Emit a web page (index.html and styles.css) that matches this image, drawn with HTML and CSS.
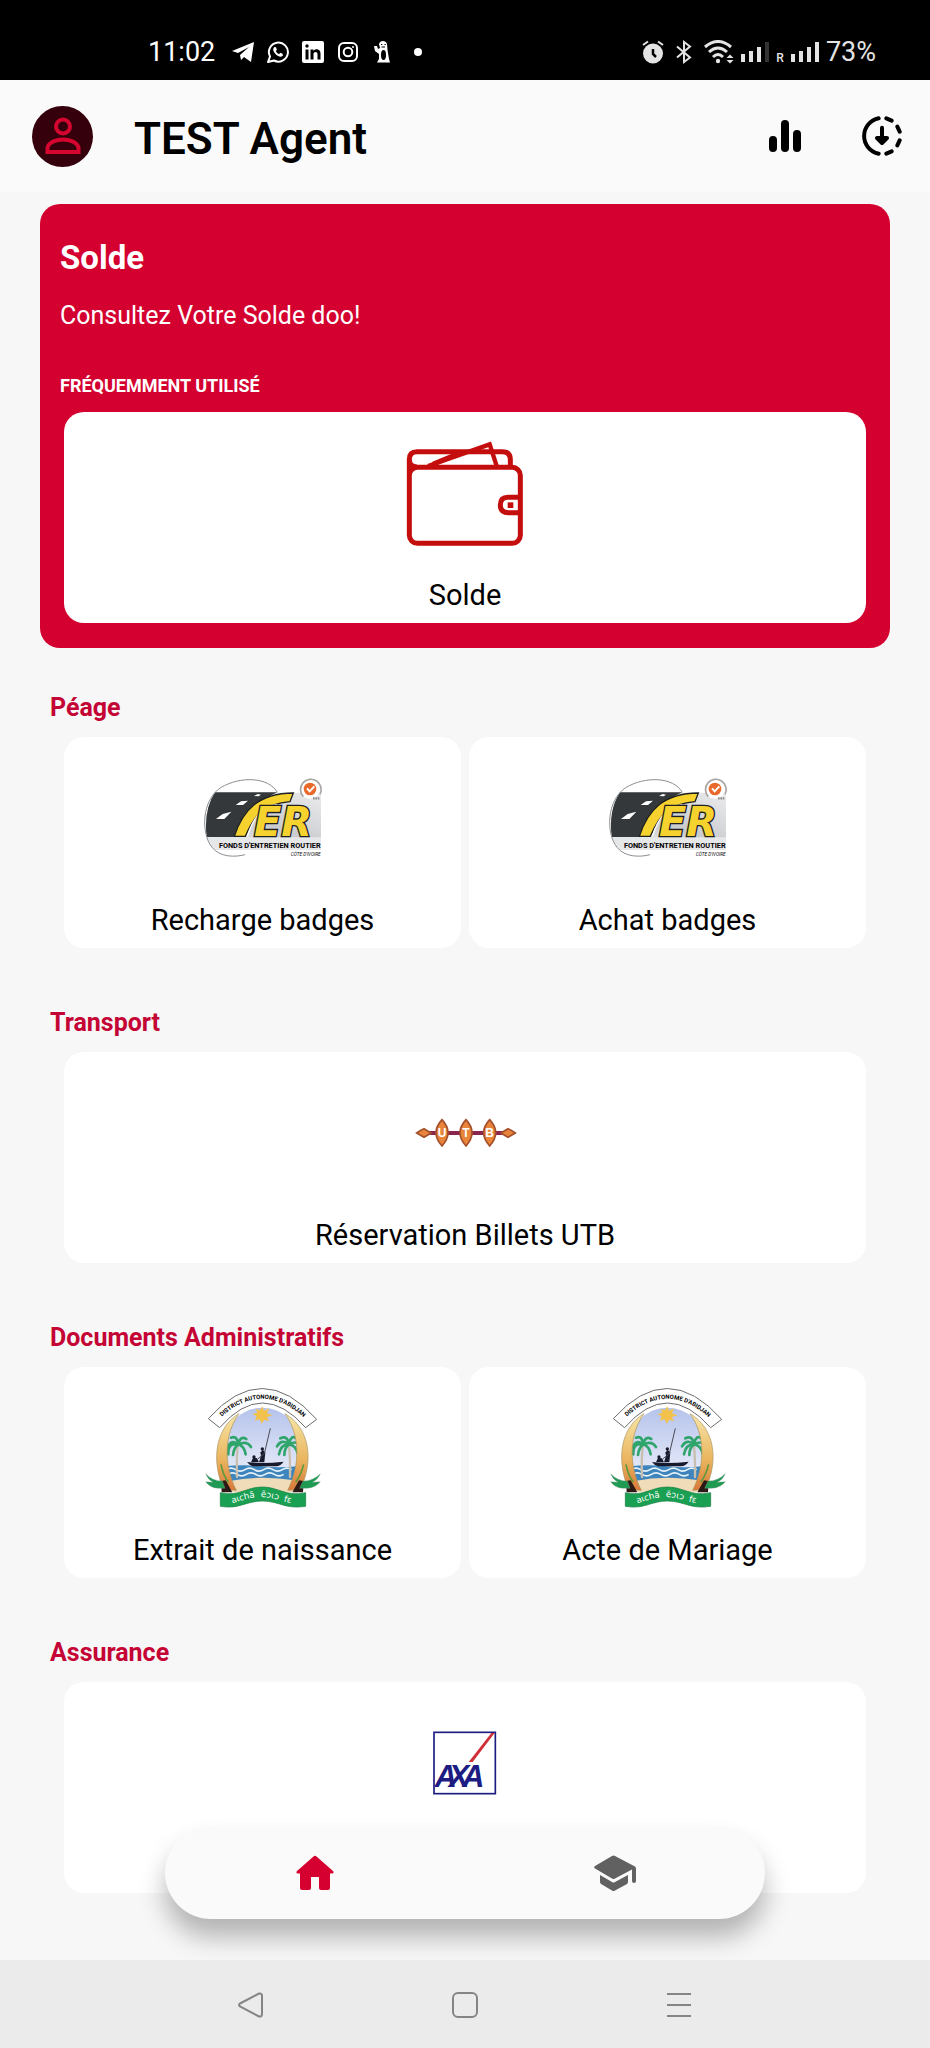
FILE: index.html
```html
<!DOCTYPE html>
<html lang="fr">
  <head>
    <meta charset="UTF-8" />
    <meta name="viewport" content="width=device-width, initial-scale=1.0" />
    <title>TEST Agent</title>
    <link rel="stylesheet" href="styles.css" />
  </head>
  <body>
    <!-- Logos utilisés plusieurs fois -->
    <svg class="sprite" aria-hidden="true">
      <defs>
        <linearGradient id="ferGrey" x1="0" y1="1" x2="1" y2="0">
          <stop offset="0" stop-color="#f2f2f3" />
          <stop offset="0.5" stop-color="#c9cbce" />
          <stop offset="1" stop-color="#ececee" />
        </linearGradient>
        <linearGradient id="sky" x1="0" y1="0" x2="0" y2="1">
          <stop offset="0" stop-color="#b5c3ec" />
          <stop offset="1" stop-color="#f3f4fb" />
        </linearGradient>
        <linearGradient id="tusk" x1="0" y1="0" x2="0" y2="1">
          <stop offset="0" stop-color="#f7e6a8" />
          <stop offset="0.6" stop-color="#eab55f" />
          <stop offset="1" stop-color="#d9793a" />
        </linearGradient>
        <path id="crestArc" d="M62 140Q200 2 340 142" />
        <path id="ribbonArc" d="M82 390C130 384 150 366 197 366S260 388 314 384" />
      </defs>

      <symbol id="logo-fer" viewBox="39 -9 360 372">
        <path d="M232 98H393V270H75Q50 240 47 205Z" fill="url(#ferGrey)" />
        <path d="M75 97H262Q185 130 133 231H50Q40 150 75 97Z" fill="#34383b" />
        <path d="M49 232H393V270H75Q58 255 49 232Z" fill="#e6e7e9" />
        <path d="M262 97C235 50 150 48 92 83C35 120 32 220 66 262C90 292 135 292 165 284" fill="none" stroke="#8b8e91" stroke-width="3" />
        <path d="M78 177L98 162L124 155L103 177ZM137 135L153 124L174 122L159 135ZM192 108L203 102L213 104L206 109Z" fill="#fff" />
        <path d="M133 229C158 150 205 100 310 99L300 125C225 132 195 160 166 229Z" fill="#f6d22e" stroke="#1d1f20" stroke-width="4" />
        <path d="M172 229C192 165 225 137 262 134" fill="none" stroke="#fff" stroke-width="4" />
        <text class="fer-letters" x="192" y="229">ER</text>
        <circle cx="360" cy="85" r="31" fill="#fff" />
        <path d="M340 110A31 31 0 1 1 390 103" fill="none" stroke="#a9a5a3" stroke-width="5" />
        <circle cx="360" cy="87" r="19" fill="#e9692c" />
        <path d="M351 85L359 94L373 79" fill="none" stroke="#fff" stroke-width="6" />
        <path d="M369 115H390" stroke="#8e8e8e" stroke-width="7" stroke-dasharray="5 2" />
        <text class="fer-name" x="392" y="265">FONDS D'ENTRETIEN ROUTIER</text>
        <text class="fer-country" x="392" y="289">CÔTE D'IVOIRE</text>
      </symbol>

      <symbol id="logo-district" viewBox="22 36 360 372">
        <ellipse cx="200" cy="220" rx="118" ry="122" fill="url(#sky)" />
        <path d="M88 274Q140 268 200 274T312 272Q308 302 288 322H108Q92 302 88 274Z" fill="#3f85bd" />
        <path d="M92 284q14 -9 28 0t28 0t28 0t28 0t28 0t28 0t28 0M96 298q14 -9 28 0t28 0t28 0t28 0t28 0t28 0" fill="none" stroke="#e9f4fb" stroke-width="5" />
        <path d="M102 318Q195 300 296 316L290 352H110Z" fill="#f1dcb9" />
        <!-- soleil -->
        <path d="M200 94l5 13 15 -7 -6 15 17 6 -17 5 6 13 -14 -5 -8 12 -6 -13 -15 4 6 -13 -13 -7 15 -4 -5 -12 13 5z" fill="#f2c24c" />
        <!-- palmiers -->
        <g fill="none" stroke-linecap="round">
          <path d="M126 214Q122 250 124 306M280 214Q284 250 283 306" stroke="#c9bfae" stroke-width="7" />
          <path d="M128 208Q106 190 96 218M128 208Q96 202 98 238M128 208Q114 218 112 240M128 208Q124 180 106 188M128 208Q134 180 152 192M128 208Q154 196 166 216M128 208Q146 214 150 238" stroke="#2fa56b" stroke-width="8" />
          <path d="M280 208Q258 190 244 214M280 208Q256 206 250 238M280 208Q266 218 266 240M280 208Q276 180 254 190M280 208Q286 178 302 190M280 208Q306 194 316 216M280 208Q300 210 306 236" stroke="#2fa56b" stroke-width="8" />
        </g>
        <!-- pirogue -->
        <path d="M154 261Q200 267 264 260Q256 272 240 274H172Q160 270 154 261Z" fill="#161a2c" />
        <path d="M166 262L172 248L184 250L190 262ZM190 262L196 242L194 232L202 226L209 232L206 262ZM170 246a5 5 0 1 1 10 0a5 5 0 1 1 -10 0M195 222a5 5 0 1 1 10 0a5 5 0 1 1 -10 0" fill="#161a2c" />
        <path d="M186 252L206 236L224 160" fill="none" stroke="#4b4b55" stroke-width="3" />
        <!-- défenses -->
        <path d="M130 116C62 156 44 250 84 344L122 346C84 270 84 180 130 116Z" fill="url(#tusk)" stroke="#a8935a" stroke-width="2" />
        <path d="M268 116C338 156 358 250 314 344L276 346C314 270 314 180 268 116Z" fill="url(#tusk)" stroke="#a8935a" stroke-width="2" />
        <path d="M76 268Q82 300 98 322M324 268Q316 300 300 322" fill="none" stroke="#5d9a3c" stroke-width="5" />
        <path d="M76 318L90 316L110 352H78ZM324 318L310 316L290 352H322Z" fill="#2b1a14" />
        <!-- ruban -->
        <path d="M30 296Q50 318 80 318L88 340L66 340Q42 338 30 320L52 322Q36 312 30 296ZM374 296Q352 318 322 318L312 340L334 340Q360 338 374 320L350 322Q368 312 374 296Z" fill="#1f9a53" stroke="#8a9a8e" stroke-width="1" />
        <path d="M74 353C130 366 150 336 200 336S270 366 330 353V394C270 404 250 378 200 378S130 404 74 394Z" fill="#19a052" stroke="#137a3e" stroke-width="2" />
        <text class="ribbon-text"><textPath href="#ribbonArc" startOffset="50%">aɩchã&nbsp; &#7869;ɔɩɔ&nbsp; fɛ</textPath></text>
        <!-- bandeau -->
        <path d="M38 131Q200 -51 363 133L330 158Q200 10 72 158Z" fill="#fff" stroke="#6d6d6d" stroke-width="3" />
        <text class="crest-text"><textPath href="#crestArc" startOffset="50%">DISTRICT AUTONOME D'ABIDJAN</textPath></text>
      </symbol>
    </svg>

    <div class="status-bar">
      <div class="status-left">
        <span class="clock">11:02</span>
        <svg width="22" height="22" viewBox="0 0 22 22"><path d="M0 10L22 1L19 21L12 16L9 19L8 14L17 6L6 12Z" fill="#fff" /></svg>
        <svg width="22" height="22" viewBox="0 0 22 22">
          <path d="M1 21L3 15.500A9.500 9.500 0 1 1 7 19.500Z" fill="none" stroke="#fff" stroke-width="2" stroke-linejoin="round" />
          <path d="M7.500 6C5 8 6.500 11 9 13.500C11.500 15.800 14 16.500 16 14.500L15.500 12.800L13.300 11.800L12 13.200C10.500 12.500 9.500 11.500 8.800 10L9.900 8.800L9 6.200Z" fill="#fff" />
        </svg>
        <svg width="22" height="22" viewBox="0 0 22 22">
          <rect width="22" height="22" rx="2" fill="#fff" />
          <path d="M3.500 8.500H6.500V18.500H3.500ZM3.300 5a1.700 1.700 0 1 1 3.400 0a1.700 1.700 0 1 1 -3.400 0M8.500 8.500H11.400V10C13 7.500 18.500 7.500 18.500 12.500V18.500H15.500V13.300C15.500 10 11.500 10.300 11.500 13.300V18.500H8.500Z" fill="#000" />
        </svg>
        <svg width="22" height="22" viewBox="0 0 22 22" fill="none" stroke="#fff" stroke-width="2">
          <rect x="2" y="2" width="18" height="18" rx="5" />
          <circle cx="11" cy="11" r="4.300" />
          <circle cx="16" cy="6" r="1" fill="#fff" stroke="none" />
        </svg>
        <svg width="22" height="22" viewBox="0 0 22 22">
          <path d="M7 3Q8 0 11 0T15 3L15.500 9L17 18L18 21.500H5L7 18L7 13L3 10L2 5L5 5L6 8L8 7Z" fill="#fff" />
          <ellipse cx="11.500" cy="14" rx="2.500" ry="5" fill="#000" />
          <path d="M9 3.500H10.300M12.500 3.500H13.800M9.500 6H13" stroke="#000" stroke-width="1" />
        </svg>
        <svg width="22" height="22" viewBox="0 0 22 22"><circle cx="11" cy="11" r="4" fill="#fff" /></svg>
      </div>
      <div class="status-right">
        <svg class="spaced" width="22" height="24" viewBox="0 0 22 24">
          <circle cx="11" cy="13.500" r="10" fill="#e4e4e4" />
          <path d="M1 5L6 1.500M16 1.500L21 5" stroke="#e4e4e4" stroke-width="2" />
          <path d="M11 9V14L14 17" fill="none" stroke="#000" stroke-width="2.500" />
        </svg>
        <svg class="spaced" width="16" height="24" viewBox="0 0 16 24"><path d="M1 6.500L14 17.500L8 22V2L14 6.500L1 17.500" fill="none" stroke="#e4e4e4" stroke-width="2" /></svg>
        <svg width="30" height="24" viewBox="0 0 30 24">
          <path d="M1 7Q14 -4 27 7M5 12Q14 4 23 12M9 17Q14 12 19 17" fill="none" stroke="#e4e4e4" stroke-width="3" />
          <circle cx="14" cy="21" r="2.200" fill="#e4e4e4" />
          <path d="M22.500 18L26 14.500L29.500 18ZM22.500 20L26 23.500L29.500 20Z" fill="#e4e4e4" />
        </svg>
        <svg width="30" height="24" viewBox="0 0 30 24">
          <path d="M1 14h4v8h-4zM9 11h4v11h-4zM17 7h4v15h-4z" fill="#e4e4e4" />
          <path d="M25 2h4v20h-4z" fill="#333" />
        </svg>
        <span class="roaming">R</span>
        <svg width="30" height="24" viewBox="0 0 30 24"><path d="M1 14h4v8h-4zM9 11h4v11h-4zM17 7h4v15h-4zM25 2h4v20h-4z" fill="#e4e4e4" /></svg>
        <span>73%</span>
      </div>
    </div>

    <header class="header">
      <button class="avatar" type="button" aria-label="Profil">
        <svg width="36" height="38" viewBox="0 0 36 38" fill="none" stroke="#d4062f" stroke-width="4">
          <circle cx="18" cy="9.500" r="7" />
          <path d="M2.500 35V30.500C4 25 12 22.500 18 22.500S32 25 33.500 30.500V35Z" />
        </svg>
      </button>
      <h1>TEST Agent</h1>
      <button class="icon-button" type="button" aria-label="Statistiques">
        <svg width="34" height="34" viewBox="0 0 34 34"><path d="M5 21V29M17 5V29M29 15V29" stroke="#000" stroke-width="8" stroke-linecap="round" /></svg>
      </button>
      <button class="icon-button" type="button" aria-label="Téléchargements">
        <svg width="40" height="40" viewBox="0 0 120 120" fill="none" stroke="#000" stroke-width="12" stroke-linecap="round" stroke-linejoin="round">
          <path d="M50 7A54 54 0 0 0 50 113M73 7L89 14M106 32L113 47M113 73L106 88M89 106L73 113" />
          <path d="M60 35V64" />
          <path d="M45 66H75L60 81Z" fill="#000" />
        </svg>
      </button>
    </header>

    <main class="content">
      <section class="hero">
        <h2>Solde</h2>
        <p>Consultez Votre Solde doo!</p>
        <h3>FRÉQUEMMENT UTILISÉ</h3>
        <div class="tiles">
          <a class="tile" href="#solde">
            <svg class="tile-logo" viewBox="75 36 360 372" fill="none" stroke="#c40d0d" stroke-width="15" stroke-linejoin="round">
              <rect x="88" y="142" width="333" height="228" rx="24" />
              <path d="M88 165V118Q88 95 111 95H366Q391 95 391 118V138M88 118Q88 141 111 141" />
              <path d="M144 138L329 73L350 138" stroke-width="13" stroke-linejoin="miter" />
              <path d="M160 132L245 97" />
              <path d="M420 232H384Q361 232 361 255T384 278H420" />
              <path d="M383 247h17v17h-17z" fill="#c40d0d" stroke="none" />
            </svg>
            <span>Solde</span>
          </a>
        </div>
      </section>

      <section class="group">
        <h2>Péage</h2>
        <div class="tiles">
          <a class="tile" href="#recharge">
            <svg class="tile-logo"><use href="#logo-fer" /></svg>
            <span>Recharge badges</span>
          </a>
          <a class="tile" href="#achat">
            <svg class="tile-logo"><use href="#logo-fer" /></svg>
            <span>Achat badges</span>
          </a>
        </div>
      </section>

      <section class="group">
        <h2>Transport</h2>
        <div class="tiles">
          <a class="tile" href="#utb">
            <svg class="tile-logo" viewBox="15 -84 360 372">
              <path d="M80 99H320" stroke="#8c2450" stroke-width="12" />
              <g fill="#e8853a" stroke="#a5502c" stroke-width="5">
                <path d="M50 99Q62 90 72 86Q82 92 93 99Q82 106 72 112Q62 106 50 99Z" />
                <path d="M346 99Q334 90 324 86Q314 92 303 99Q314 106 324 112Q334 106 346 99Z" />
                <path d="M126 59Q162 98 126 138Q90 98 126 59Z" />
                <path d="M198 59Q234 98 198 138Q162 98 198 59Z" />
                <path d="M269 59Q305 98 269 138Q233 98 269 59Z" />
              </g>
              <g class="utb-letters">
                <text x="126" y="112">U</text>
                <text x="198" y="112">T</text>
                <text x="269" y="112">B</text>
              </g>
            </svg>
            <span>Réservation Billets UTB</span>
          </a>
        </div>
      </section>

      <section class="group">
        <h2>Documents Administratifs</h2>
        <div class="tiles">
          <a class="tile" href="#naissance">
            <svg class="tile-logo"><use href="#logo-district" /></svg>
            <span>Extrait de naissance</span>
          </a>
          <a class="tile" href="#mariage">
            <svg class="tile-logo"><use href="#logo-district" /></svg>
            <span>Acte de Mariage</span>
          </a>
        </div>
      </section>

      <section class="group">
        <h2>Assurance</h2>
        <div class="tiles">
          <a class="tile" href="#axa" aria-label="Assurance">
            <svg class="tile-logo" viewBox="-45 -42 360 372">
              <rect x="42" y="49" width="184" height="184" fill="#fff" stroke="#1c1c82" stroke-width="5" />
              <path d="M146 138L214 51H224L158 138Z" fill="#cf3038" />
              <g class="axa-letters">
                <text x="44" y="212">A</text>
                <text x="86" y="212">X</text>
                <text x="127" y="212">A</text>
              </g>
            </svg>
          </a>
        </div>
      </section>

      <nav class="tab-bar">
        <a href="#accueil" aria-label="Accueil">
          <svg width="38" height="36" viewBox="0 0 38 36"><path d="M17.500 1.500Q19 0 20.500 1.500L37 16Q38.500 18.500 36 18.500H34V33Q34 35 32 35H25Q23 35 23 33V22H15V33Q15 35 13 35H6Q4 35 4 33V18.500H2Q-.5 18.500 1 16Z" fill="#d5002f" /></svg>
        </a>
        <a href="#formation" aria-label="Formation">
          <svg width="42" height="36" viewBox="0 0 42 36" fill="#616161">
            <path d="M18 1Q19.500 0 21 1L41 11.500Q42 12.500 42 13.500V26Q42 28 40 28T38 26V14.500L21 23.500Q19.500 24.500 18 23.500L1 13.500Q-.5 12 1 11Z" />
            <path d="M6 20L18 27Q19.500 28 21 27L34 20V27Q34 28 33 29L21 35.500Q19.500 36.500 18 35.500L7 29Q6 28 6 27Z" />
          </svg>
        </a>
      </nav>
    </main>

    <footer class="system-bar">
      <button type="button" aria-label="Retour">
        <svg width="26" height="26" viewBox="0 0 26 26"><path d="M2 11.500L21 1.500Q24 1 24 4V22Q24 25 21 24.500L2 14.500Q0 13 2 11.500Z" /></svg>
      </button>
      <button type="button" aria-label="Écran d'accueil">
        <svg width="26" height="26" viewBox="0 0 26 26"><rect x="1" y="1" width="24" height="24" rx="5" /></svg>
      </button>
      <button type="button" aria-label="Applications récentes">
        <svg width="26" height="26" viewBox="0 0 26 26"><path d="M1 2H25M1 13H25M1 24H25" /></svg>
      </button>
    </footer>
  </body>
</html>
```

FILE: styles.css
```css
* {
  box-sizing: border-box;
}
body {
  margin: 0;
  min-height: 100vh;
  display: flex;
  flex-direction: column;
  font-family: Roboto, "Liberation Sans", sans-serif;
  background-color: #f7f7f7;
  color: #000;
}
h1,
h2,
h3,
p {
  margin: 0;
}
svg {
  display: block;
}
button {
  padding: 0;
  border: none;
  background: none;
  cursor: pointer;
}
.sprite {
  position: absolute;
  width: 0;
  height: 0;
}

/* Barre d'état */
.status-bar {
  display: flex;
  justify-content: space-between;
  height: 80px;
  padding: 24px 54px 0 148px;
  background-color: #000;
  color: #fff;
  font-size: 27px;
}
.status-left,
.status-right {
  display: flex;
  align-items: center;
  gap: 13px;
}
.clock {
  margin-right: 4px;
}
.status-right {
  gap: 6px;
  color: #e4e4e4;
}
.status-right .spaced {
  margin-right: 6px;
}
.roaming {
  padding-top: 11px;
  font-size: 12px;
  font-weight: 500;
}

/* En-tête */
.header {
  display: flex;
  align-items: center;
  height: 112px;
  padding: 0 28px 0 32px;
  background-color: #fafafa;
}
.header h1 {
  flex: 1;
  margin-left: 41px;
  padding-top: 5px;
  font-size: 44px;
  font-weight: 600;
}
.avatar {
  display: flex;
  align-items: center;
  justify-content: center;
  width: 61px;
  height: 61px;
  border-radius: 50%;
  background-color: #35000c;
}
.icon-button + .icon-button {
  margin-left: 60px;
}

/* Contenu */
.content {
  position: relative;
  flex: 1;
  padding: 12px 40px 7px;
  overflow: hidden;
}
.hero {
  margin-bottom: 45px;
  padding: 34px 20px 25px;
  border-radius: 20px;
  background-color: #d4002f;
  color: #fff;
}
.hero h2 {
  font-size: 33px;
  line-height: 40px;
}
.hero p {
  margin-top: 22px;
  font-size: 25px;
  line-height: 32px;
}
.hero h3 {
  margin: 42px 0 14px;
  font-size: 18px;
  line-height: 24px;
}
.hero .tiles {
  margin: 0 4px;
}
.group {
  margin-bottom: 60px;
}
.group h2 {
  margin: 0 10px 14px;
  color: #c40434;
  font-size: 25px;
  line-height: 30px;
}
.tiles {
  display: flex;
  gap: 8px;
  margin: 0 24px;
}
.tile {
  display: flex;
  flex: 1;
  flex-direction: column;
  align-items: center;
  justify-content: space-between;
  min-height: 211px;
  padding: 20px 10px 10px;
  border-radius: 20px;
  background-color: #fff;
  color: #000;
  font-size: 29px;
  line-height: 36px;
  text-decoration: none;
}
.tile-logo {
  width: 120px;
  height: 124px;
}

/* Textes des logos */
.fer-letters {
  fill: #f6d22e;
  stroke: #1d1f20;
  stroke-width: 8px;
  paint-order: stroke;
  font: italic bold 120px "DejaVu Sans", sans-serif;
}
.fer-name {
  font: bold 22px Roboto, sans-serif;
  text-anchor: end;
}
.fer-country {
  font: italic 14px Roboto, sans-serif;
  text-anchor: end;
}
.utb-letters {
  fill: #fff;
  font: bold 36px "Liberation Sans", sans-serif;
  text-anchor: middle;
}
.crest-text {
  font: bold 18px Roboto, sans-serif;
  text-anchor: middle;
}
.ribbon-text {
  fill: #fff;
  font: 26px "DejaVu Sans", sans-serif;
  text-anchor: middle;
}
.axa-letters {
  fill: #1c1c82;
  font: italic bold 92px "Liberation Sans", sans-serif;
}

/* Menu flottant */
.tab-bar {
  position: absolute;
  right: 0;
  bottom: 41px;
  left: 0;
  display: flex;
  width: 600px;
  max-width: 90%;
  height: 92px;
  margin: 0 auto;
  border-radius: 46px;
  background-color: #fafafa;
  box-shadow: 0 18px 26px rgba(0, 0, 0, 0.28);
}
.tab-bar a {
  display: flex;
  flex: 1;
  align-items: center;
  justify-content: center;
}

/* Barre système */
.system-bar {
  display: flex;
  align-items: center;
  justify-content: center;
  gap: 188px;
  height: 89px;
  background-color: #ebebeb;
}
.system-bar svg {
  fill: none;
  stroke: #858585;
  stroke-width: 2px;
}
```
